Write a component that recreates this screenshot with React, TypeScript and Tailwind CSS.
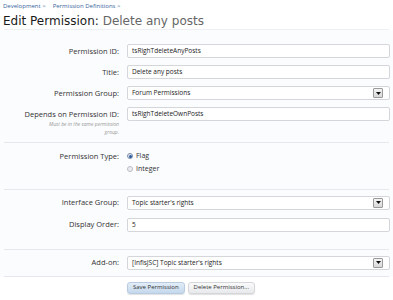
import React from 'react';

const font = { fontFamily: '"Open Sans", "Liberation Sans", sans-serif' };

const SelectArrow = () => (
  <span className="ml-auto mr-[6px] flex h-[10px] w-[10px] items-center justify-center rounded-[1px] border border-[#9a9a9a] bg-gradient-to-b from-[#f4f4f4] to-[#d8d8d8]">
    <svg width="5" height="3" viewBox="0 0 5 3">
      <path d="M0 0h5L2.5 3z" fill="#111" />
    </svg>
  </span>
);

const Field = ({ value, select }: { value: string; select?: boolean }) => (
  <div className="flex h-[14px] w-[263px] items-center rounded-[2px] border border-[#d4d6dc] bg-white pl-[4px] text-[6.5px] text-[#222]">
    <span>{value}</span>
    {select && <SelectArrow />}
  </div>
);

const Row = ({ label, children, hint }: { label: string; children: React.ReactNode; hint?: string[] }) => (
  <div className="flex items-start">
    <div className="w-[119px] text-right">
      <div className="pt-[2.5px] text-[7.5px] leading-[9px] text-[#333]">{label}</div>
      {hint && (
        <div className="mt-[1px] text-[5px] italic leading-[8px] text-[#999]">
          {hint.map(h => (
            <div key={h}>{h}</div>
          ))}
        </div>
      )}
    </div>
    <div className="ml-[8px]">{children}</div>
  </div>
);

const Divider = () => <div className="mx-[4px] h-px bg-[#e6e8ee]" />;

const Radio = ({ label, checked }: { label: string; checked?: boolean }) => (
  <label className="flex h-[9px] items-center gap-[3px] text-[7px] text-[#333]">
    <span
      className={
        checked
          ? 'flex h-[6px] w-[6px] items-center justify-center rounded-full border border-[#7d8ea8] bg-[#dfe8f4]'
          : 'h-[6px] w-[6px] rounded-full border border-[#b8bcc4] bg-[#eceef2]'
      }
    >
      {checked && <span className="h-[3px] w-[3px] rounded-full bg-[#2d5c9c]" />}
    </span>
    {label}
  </label>
);

export default function App() {
  return (
    <div className="h-[300px] w-[393px] overflow-hidden bg-white" style={font}>
      {/* Breadcrumb */}
      <div className="flex gap-[7px] px-[3px] pt-[3px] text-[6px] leading-[7px] text-[#36659c]">
        <span>Development &gt;</span>
        <span>Permission Definitions &gt;</span>
      </div>

      {/* Heading */}
      <h1 className="px-[3px] pt-[3px] text-[12px] leading-[16px] text-[#1a1a1a]" style={{ fontFamily: '"DejaVu Sans", sans-serif' }}>
        Edit Permission: <span className="text-[#666]">Delete any posts</span>
      </h1>
      <div className="mx-[4px] h-px bg-[#eef0f4]" />

      <div className="bg-[#fbfcfe]">
        <div className="flex flex-col gap-[7px] pt-[14px] pb-[6px]">
          <Row label="Permission ID:">
            <Field value="tsRighTdeleteAnyPosts" />
          </Row>
          <Row label="Title:">
            <Field value="Delete any posts" />
          </Row>
          <Row label="Permission Group:">
            <Field value="Forum Permissions" select />
          </Row>
          <Row label="Depends on Permission ID:" hint={['Must be in the same permission', 'group.']}>
            <Field value="tsRighTdeleteOwnPosts" />
          </Row>
        </div>
        <Divider />

        <div className="pt-[7px] pb-[15px]">
          <Row label="Permission Type:">
            <div className="flex flex-col gap-[4px] pt-[2px]">
              <Radio label="Flag" checked />
              <Radio label="Integer" />
            </div>
          </Row>
        </div>
        <Divider />

        <div className="flex flex-col gap-[8px] pt-[6px] pb-[17px]">
          <Row label="Interface Group:">
            <Field value="Topic starter's rights" select />
          </Row>
          <Row label="Display Order:">
            <Field value="5" />
          </Row>
        </div>
        <Divider />

        <div className="pt-[6px] pb-[6px]">
          <Row label="Add-on:">
            <Field value="[InfisJSC] Topic starter's rights" select />
          </Row>
        </div>
        <Divider />
      </div>

      {/* Buttons */}
      <div className="flex gap-[3px] pl-[127px] pt-[5px]">
        <button className="h-[12px] rounded-[3px] border border-[#b9cbe0] bg-gradient-to-b from-[#e2edf8] to-[#c4d8ec] px-[5px] text-[6px] text-[#333] shadow-[0_1px_1px_rgba(0,0,0,0.12)]">
          Save Permission
        </button>
        <button className="h-[12px] rounded-[3px] border border-[#d4d6da] bg-gradient-to-b from-[#fafafa] to-[#e8e9ec] px-[5px] text-[6px] text-[#333] shadow-[0_1px_1px_rgba(0,0,0,0.12)]">
          Delete Permission...
        </button>
      </div>
    </div>
  );
}
